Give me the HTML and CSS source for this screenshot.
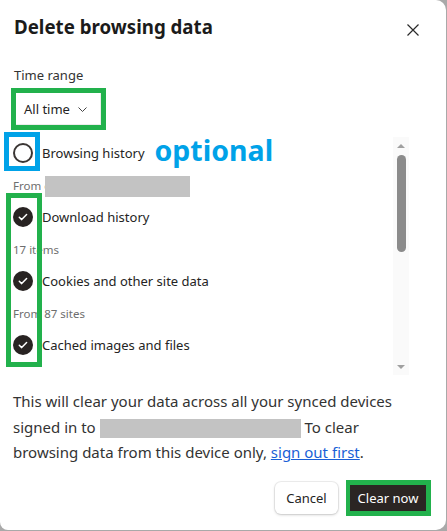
FILE: index.html
```html
<!DOCTYPE html>
<html lang="en">
<head>
<meta charset="utf-8">
<title>Delete browsing data</title>
<link rel="stylesheet" href="styles.css">
</head>
<body>
<div class="dialog">
  <div class="header">
    <h1 class="title">Delete browsing data</h1>
    <button class="close" aria-label="Close">
      <svg width="12" height="12" viewBox="0 0 12 12"><path d="M0.5 0.5L11.5 11.5M11.5 0.5L0.5 11.5" stroke="#2a2a2a" stroke-width="1.2" fill="none"/></svg>
    </button>
  </div>
  <div class="label">Time range</div>
  <div class="range">
    <button class="select">All time
      <svg width="9" height="5" viewBox="0 0 9 5"><path d="M0.5 0.5L4.5 4.5L8.5 0.5" stroke="#444" stroke-width="1" fill="none"/></svg>
    </button>
  </div>
  <div class="list-wrap">
    <div class="list">
      <div class="annot-checks"></div>
      <div class="row">
        <span class="radio-mark"><span class="radio"></span></span>
        <span>Browsing history</span>
        <span class="optional">optional</span>
      </div>
      <div class="sub"><span>From e</span><span class="redact"></span></div>
      <div class="row">
        <svg class="check" width="20" height="20" viewBox="0 0 20 20"><circle cx="10" cy="10" r="10" fill="#282322"/><path d="M6.3 10.3L8.7 12.6L13.6 7.6" stroke="#fff" stroke-width="1.5" fill="none" stroke-linecap="round" stroke-linejoin="round"/></svg>
        <span>Download history</span>
      </div>
      <div class="sub">17 items</div>
      <div class="row">
        <svg class="check" width="20" height="20" viewBox="0 0 20 20"><circle cx="10" cy="10" r="10" fill="#282322"/><path d="M6.3 10.3L8.7 12.6L13.6 7.6" stroke="#fff" stroke-width="1.5" fill="none" stroke-linecap="round" stroke-linejoin="round"/></svg>
        <span>Cookies and other site data</span>
      </div>
      <div class="sub">From 87 sites</div>
      <div class="row">
        <svg class="check" width="20" height="20" viewBox="0 0 20 20"><circle cx="10" cy="10" r="10" fill="#282322"/><path d="M6.3 10.3L8.7 12.6L13.6 7.6" stroke="#fff" stroke-width="1.5" fill="none" stroke-linecap="round" stroke-linejoin="round"/></svg>
        <span>Cached images and files</span>
      </div>
      <div class="sub">319 MB</div>
    </div>
    <div class="scrollbar">
      <span class="arrow-up"></span>
      <span class="thumb"></span>
      <span class="arrow-down"></span>
    </div>
  </div>
  <p class="note">This will clear your data across all your synced devices signed in to <span class="redact-inline"></span> To clear browsing data from this device only, <a href="#" class="link">sign out first</a>.</p>
  <div class="actions">
    <button class="btn-cancel">Cancel</button>
    <button class="btn-clear">Clear now</button>
  </div>
</div>
</body>
</html>
```

FILE: styles.css
```css
body {
  margin: 0;
  background: #a9a9a9;
  font-family: "Noto Sans", "Open Sans", sans-serif;
  color: #242424;
}

.dialog {
  width: 446px;
  height: 530px;
  background: #fff;
  border-radius: 0 10px 10px 8px;
  display: flex;
  flex-direction: column;
  overflow: hidden;
}

.header {
  display: flex;
  justify-content: space-between;
  align-items: flex-start;
  padding: 13px 27px 0 14px;
}

.title {
  margin: 0;
  font-size: 18.7px;
  line-height: 28px;
  font-weight: 700;
  color: #1b1b1b;
}

.close {
  margin-top: 11px;
  width: 12px;
  height: 12px;
  padding: 0;
  border: 0;
  background: none;
  display: flex;
}

.label {
  margin: 24px 0 0 14px;
  font-size: 13px;
  line-height: 20px;
  color: #333;
}

.range {
  margin: 3px 0 0 11px;
  align-self: flex-start;
  border: 5px solid #22b14c;
  display: flex;
}

.select {
  width: 85px;
  height: 32px;
  border: 0;
  background: #fff;
  box-shadow: inset -1px -1px 0 #ececec;
  display: flex;
  align-items: center;
  gap: 8px;
  padding: 0 0 0 8px;
  font-family: inherit;
  font-size: 13px;
  color: #242424;
}

.list-wrap {
  display: flex;
  align-items: flex-start;
  margin-top: 2px;
  height: 243px;
}

.list {
  position: relative;
  flex: 1;
  height: 241px;
  box-sizing: border-box;
  padding-top: 5px;
  overflow: hidden;
}

.annot-checks {
  position: absolute;
  left: 6px;
  top: 61px;
  width: 36px;
  height: 174px;
  border: 5px solid #22b14c;
  box-sizing: border-box;
  z-index: 2;
}

.row {
  display: flex;
  align-items: center;
  height: 32px;
  padding-left: 13px;
  gap: 9px;
  font-size: 13px;
  color: #242424;
}

.radio-mark {
  position: relative;
  display: flex;
}

.radio-mark::after {
  content: "";
  position: absolute;
  left: -9px;
  top: -11px;
  width: 36px;
  height: 39px;
  border: 5px solid #00a2e8;
  box-sizing: border-box;
}

.radio {
  width: 20px;
  height: 20px;
  border: 2px solid #3b3634;
  border-radius: 50%;
  box-sizing: border-box;
}

.check {
  flex: none;
}

.optional {
  margin-left: 1px;
  margin-bottom: 6px;
  font-size: 28.5px;
  line-height: 26px;
  font-weight: 700;
  color: #00a2e8;
}

.sub {
  position: relative;
  height: 32px;
  display: flex;
  align-items: center;
  padding-left: 13px;
  font-size: 11.5px;
  color: #6e6e6e;
}

.redact {
  position: absolute;
  left: 45px;
  top: 7px;
  width: 145px;
  height: 21px;
  background: #c3c3c3;
}

.scrollbar {
  width: 16px;
  height: 238px;
  margin-top: 5px;
  margin-right: 37px;
  background: #fafafa;
  display: flex;
  flex-direction: column;
  align-items: center;
}

.arrow-up {
  margin-top: 7px;
  width: 0;
  height: 0;
  border-left: 4px solid transparent;
  border-right: 4px solid transparent;
  border-bottom: 4px solid #a0a0a0;
}

.thumb {
  margin-top: 7px;
  width: 9px;
  height: 97px;
  border-radius: 5px;
  background: #8b8b8b;
}

.arrow-down {
  margin-top: auto;
  margin-bottom: 6px;
  width: 0;
  height: 0;
  border-left: 4px solid transparent;
  border-right: 4px solid transparent;
  border-top: 4px solid #a0a0a0;
}

.note {
  margin: 14px 30px 0 13px;
  font-size: 15px;
  line-height: 25.5px;
  color: #333;
}

.redact-inline {
  display: inline-block;
  width: 201px;
  height: 19px;
  background: #c3c3c3;
  vertical-align: middle;
}

.link {
  color: #1a5fd6;
}

.actions {
  display: flex;
  justify-content: flex-end;
  align-items: center;
  gap: 8px;
  margin: 14px 15px 0 0;
}

.btn-cancel {
  width: 63px;
  height: 32px;
  border: 0;
  border-radius: 6px;
  background: #fff;
  box-shadow: 0 0 0 1px rgba(0, 0, 0, 0.06), 0 1px 3px rgba(0, 0, 0, 0.18);
  font-family: inherit;
  font-size: 13px;
  color: #242424;
  padding: 0;
}

.btn-clear {
  width: 85px;
  height: 36px;
  box-sizing: border-box;
  border: 5px solid #22b14c;
  border-left-width: 4px;
  background: #2b2523;
  color: #fff;
  font-family: inherit;
  font-size: 13px;
  padding: 0;
}
```
